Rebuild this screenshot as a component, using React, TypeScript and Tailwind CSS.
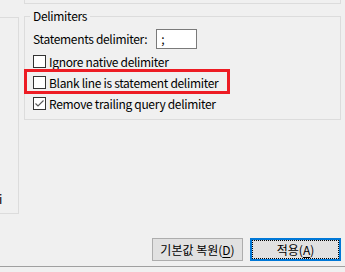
import React from "react";

const font = { fontFamily: '"Noto Sans CJK KR", "Noto Sans", sans-serif' };

function Box({ checked }: { checked?: boolean }) {
  return (
    <span className="w-[13px] h-[13px] border border-[#333333] bg-white flex items-center justify-center shrink-0">
      {checked && (
        <svg width="11" height="11" viewBox="0 0 11 11">
          <path d="M1.5 5.5 L4 8 L9.5 2.5" fill="none" stroke="#555555" strokeWidth="1.1" />
        </svg>
      )}
    </span>
  );
}

export default function App() {
  return (
    <div
      className="w-[345px] h-[272px] bg-[#f0f0f0] flex flex-col overflow-hidden text-[12px] leading-[16px] text-black"
      style={font}
    >
      <div className="flex h-[238px]">
        <div className="w-[19px] h-[197px] mt-[17px] border-t border-r border-b border-[#dcdcdc] flex flex-col justify-end pb-[6px] overflow-hidden">
          <span className="-ml-[1px]">i</span>
        </div>
        <div className="flex-1 flex flex-col tracking-[-0.32px]">
          <div className="h-[4px] ml-[5px] mr-[4px] border-l border-r border-b border-[#dcdcdc]" />
          <fieldset className="ml-[5px] mr-[4px] mt-[4px] border border-[#dcdcdc] pl-[8px] pr-[8px] pt-[5px] pb-[5px]">
            <legend className="-ml-[3px] px-[3px]">Delimiters</legend>
            <div className="flex items-center h-[20px]">
              <span>Statements delimiter:</span>
              <div className="ml-[9px] w-[41px] h-[20px] border border-[#7a7a7a] bg-white flex items-center pl-[4px]">
                ;
              </div>
            </div>
            <div className="mt-[2px] flex items-center h-[21px] gap-[3px]">
              <Box />
              <span>Ignore native delimiter</span>
            </div>
            <div className="relative flex items-center h-[21px] gap-[3px]">
              <Box />
              <span>Blank line is statement delimiter</span>
              <div className="absolute left-[-9px] top-[-3px] w-[206px] h-[25px] border-[3px] border-[#ed1c24]" />
            </div>
            <div className="flex items-center h-[21px] gap-[3px]">
              <Box checked />
              <span>Remove trailing query delimiter</span>
            </div>
          </fieldset>
        </div>
      </div>
      <div className="flex justify-end gap-[7px] pr-[4px] h-[23px]">
        <button className="w-[91px] h-[23px] border border-[#adadad] bg-[#e1e1e1] flex items-center justify-center">
          기본값 복원(<u className="underline-offset-2">D</u>)
        </button>
        <button className="w-[91px] h-[23px] border-2 border-[#0078d7] bg-[#e1e1e1] flex items-center justify-center outline-1 outline-dotted outline-black outline-offset-[-3px]">
          적용(<u className="underline-offset-2">A</u>)
        </button>
      </div>
      <div className="mt-[5px] border-t border-[#a0a0a0]" />
    </div>
  );
}
